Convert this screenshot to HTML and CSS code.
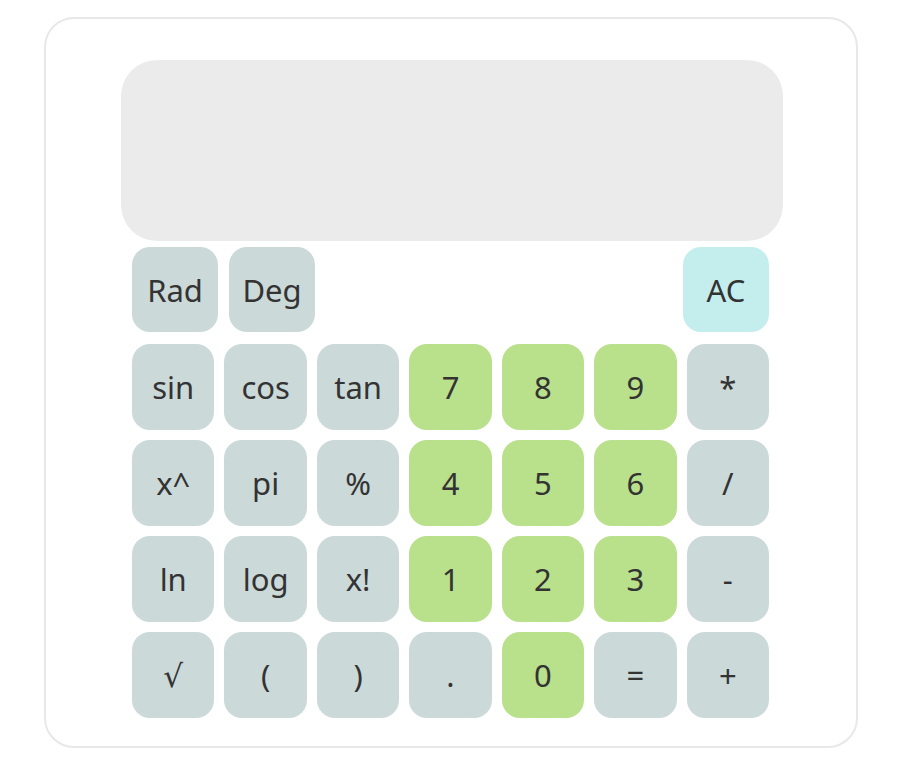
FILE: index.html
```html
<!DOCTYPE html>
<html>
    <head>
        <meta charset="utf-8">
        <title>Calculator</title>
        <link rel="stylesheet" href="styles.css">
    </head>
    <body>
        <div class="calc">
            <div class="screen"></div>
            <div class="top-row">
                <button class="key">Rad</button>
                <button class="key">Deg</button>
                <button class="key clear">AC</button>
            </div>
            <div class="keys">
                <button class="key">sin</button>
                <button class="key">cos</button>
                <button class="key">tan</button>
                <button class="key num">7</button>
                <button class="key num">8</button>
                <button class="key num">9</button>
                <button class="key">*</button>

                <button class="key">x^</button>
                <button class="key">pi</button>
                <button class="key">%</button>
                <button class="key num">4</button>
                <button class="key num">5</button>
                <button class="key num">6</button>
                <button class="key">/</button>

                <button class="key">ln</button>
                <button class="key">log</button>
                <button class="key">x!</button>
                <button class="key num">1</button>
                <button class="key num">2</button>
                <button class="key num">3</button>
                <button class="key">-</button>

                <button class="key">√</button>
                <button class="key">(</button>
                <button class="key">)</button>
                <button class="key">.</button>
                <button class="key num">0</button>
                <button class="key">=</button>
                <button class="key">+</button>
            </div>
        </div>
    </body>
</html>
```

FILE: styles.css
```css
*{
    margin:0px;
    padding:0px;
    box-sizing:border-box;
}
body{
    background:#fff;
    font-family:"Noto Sans","DejaVu Sans",sans-serif;
}
.calc{
    width:814px;
    height:731px;
    margin:17px 0 0 44px;
    padding:41px 0 0 75px;
    border:2px solid #e8e8e8;
    border-radius:30px;
}
.screen{
    width:662px;
    height:181px;
    background:#ebebeb;
    border-radius:36px;
}
.top-row{
    display:flex;
    gap:11px;
    width:637px;
    margin:6px 0 0 11px;
}
.top-row .key{
    width:86px;
    height:85px;
}
.top-row .clear{
    margin-left:auto;
    background:#c4eeee;
}
.keys{
    display:grid;
    grid-template-columns:repeat(7,1fr);
    grid-auto-rows:86px;
    column-gap:10px;
    row-gap:10px;
    width:637px;
    margin:12px 0 0 11px;
}
.key{
    border:none;
    border-radius:18px;
    background:#cbd9d9;
    color:#333;
    font-family:inherit;
    font-size:31px;
    font-weight:400;
}
.key.num{
    background:#b9e08b;
}
```
